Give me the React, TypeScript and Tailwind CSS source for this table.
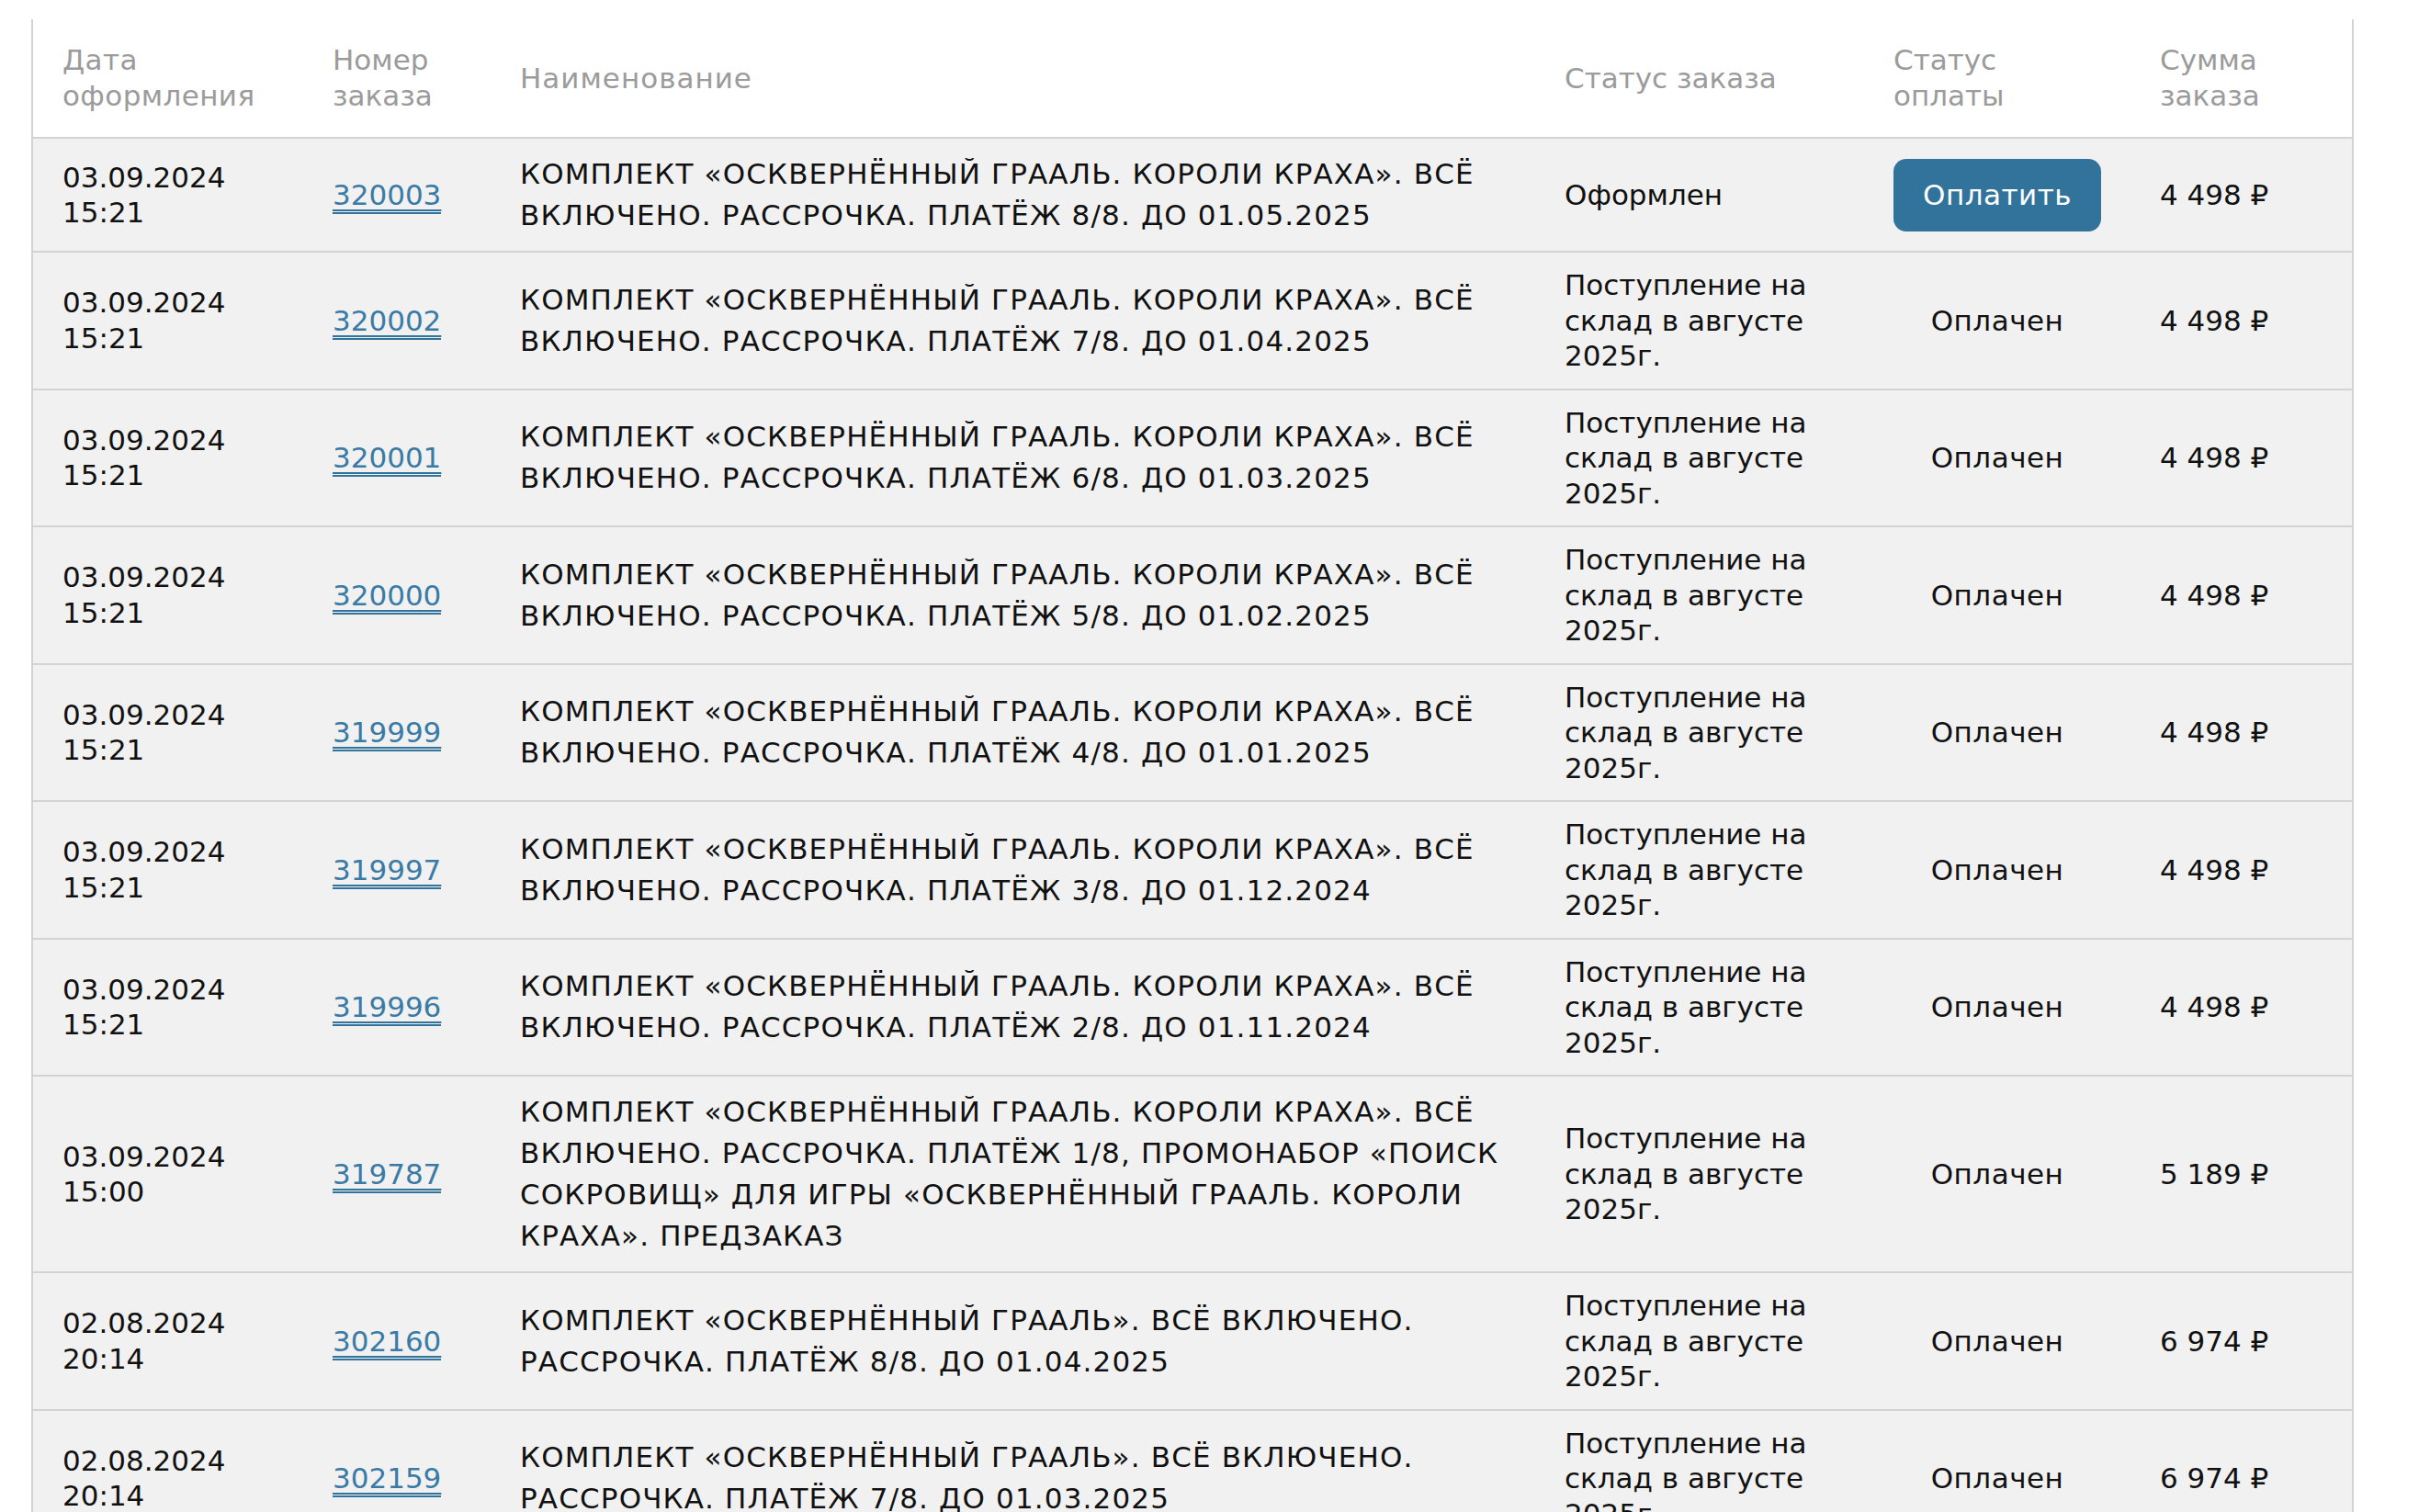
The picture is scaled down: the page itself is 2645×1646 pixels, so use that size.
type Row = {
  date: string
  time: string
  num: string
  name: string[]
  status: string[]
  paid: boolean
  sum: string
}

const WH = ['Поступление на', 'склад в августе', '2025г.']
const HEAD = 'КОМПЛЕКТ «ОСКВЕРНЁННЫЙ ГРААЛЬ. КОРОЛИ КРАХА». ВСЁ'

const rows: Row[] = [
  { date: '03.09.2024', time: '15:21', num: '320003', name: [HEAD, 'ВКЛЮЧЕНО. РАССРОЧКА. ПЛАТЁЖ 8/8. ДО 01.05.2025'], status: ['Оформлен'], paid: false, sum: '4 498 ₽' },
  { date: '03.09.2024', time: '15:21', num: '320002', name: [HEAD, 'ВКЛЮЧЕНО. РАССРОЧКА. ПЛАТЁЖ 7/8. ДО 01.04.2025'], status: WH, paid: true, sum: '4 498 ₽' },
  { date: '03.09.2024', time: '15:21', num: '320001', name: [HEAD, 'ВКЛЮЧЕНО. РАССРОЧКА. ПЛАТЁЖ 6/8. ДО 01.03.2025'], status: WH, paid: true, sum: '4 498 ₽' },
  { date: '03.09.2024', time: '15:21', num: '320000', name: [HEAD, 'ВКЛЮЧЕНО. РАССРОЧКА. ПЛАТЁЖ 5/8. ДО 01.02.2025'], status: WH, paid: true, sum: '4 498 ₽' },
  { date: '03.09.2024', time: '15:21', num: '319999', name: [HEAD, 'ВКЛЮЧЕНО. РАССРОЧКА. ПЛАТЁЖ 4/8. ДО 01.01.2025'], status: WH, paid: true, sum: '4 498 ₽' },
  { date: '03.09.2024', time: '15:21', num: '319997', name: [HEAD, 'ВКЛЮЧЕНО. РАССРОЧКА. ПЛАТЁЖ 3/8. ДО 01.12.2024'], status: WH, paid: true, sum: '4 498 ₽' },
  { date: '03.09.2024', time: '15:21', num: '319996', name: [HEAD, 'ВКЛЮЧЕНО. РАССРОЧКА. ПЛАТЁЖ 2/8. ДО 01.11.2024'], status: WH, paid: true, sum: '4 498 ₽' },
  {
    date: '03.09.2024', time: '15:00', num: '319787',
    name: [HEAD, 'ВКЛЮЧЕНО. РАССРОЧКА. ПЛАТЁЖ 1/8, ПРОМОНАБОР «ПОИСК', 'СОКРОВИЩ» ДЛЯ ИГРЫ «ОСКВЕРНЁННЫЙ ГРААЛЬ. КОРОЛИ', 'КРАХА». ПРЕДЗАКАЗ'],
    status: WH, paid: true, sum: '5 189 ₽',
  },
  { date: '02.08.2024', time: '20:14', num: '302160', name: ['КОМПЛЕКТ «ОСКВЕРНЁННЫЙ ГРААЛЬ». ВСЁ ВКЛЮЧЕНО.', 'РАССРОЧКА. ПЛАТЁЖ 8/8. ДО 01.04.2025'], status: WH, paid: true, sum: '6 974 ₽' },
  { date: '02.08.2024', time: '20:14', num: '302159', name: ['КОМПЛЕКТ «ОСКВЕРНЁННЫЙ ГРААЛЬ». ВСЁ ВКЛЮЧЕНО.', 'РАССРОЧКА. ПЛАТЁЖ 7/8. ДО 01.03.2025'], status: WH, paid: true, sum: '6 974 ₽' },
]

function Lines({ items }: { items: string[] }) {
  return <>{items.map((l, i) => <div key={i} className="whitespace-nowrap">{l}</div>)}</>
}

export default function App() {
  return (
    <div className="min-h-screen bg-white pt-[21px] pl-[34px] font-['DejaVu_Sans',sans-serif] text-[31px] text-[#111]">
      <div className="w-[2528px] border-x-2 border-[#d3d3d3]">
        <table className="w-full table-fixed border-collapse">
          <colgroup>
            <col className="w-[294px]" />
            <col className="w-[204px]" />
            <col className="w-[1137px]" />
            <col className="w-[358px]" />
            <col className="w-[290px]" />
            <col className="w-[241px]" />
          </colgroup>
          <thead>
            <tr className="text-left text-[#9b9b9b] leading-[39px]">
              <th className="px-[32px] py-[25px] font-normal align-middle tracking-[0.4px]">Дата<br />оформления</th>
              <th className="px-[32px] py-[25px] font-normal align-middle">Номер<br />заказа</th>
              <th className="px-[32px] py-[25px] font-normal align-middle tracking-[1px]">Наименование</th>
              <th className="px-[32px] py-[25px] font-normal align-middle">Статус заказа</th>
              <th className="px-[32px] py-[25px] font-normal align-middle">Статус<br />оплаты</th>
              <th className="px-[32px] py-[25px] font-normal align-middle">Сумма<br />заказа</th>
            </tr>
          </thead>
          <tbody>
            {rows.map((r) => (
              <tr key={r.num} className="bg-[#f1f1f1] border-t-2 border-[#d3d3d3] leading-[38.5px]">
                <td className="px-[32px] py-[16px] align-middle">{r.date}<br />{r.time}</td>
                <td className="px-[32px] py-[16px] align-middle">
                  <a href="#" className="text-[#3a7ba6] underline decoration-[#31739a] decoration-2 underline-offset-[5px] border-b-2 border-[#31739a] pb-[1px]">{r.num}</a>
                </td>
                <td className="px-[32px] py-[16px] align-middle leading-[45px] tracking-[1.15px]"><Lines items={r.name} /></td>
                <td className="px-[32px] py-[16px] align-middle"><Lines items={r.status} /></td>
                <td className="px-[32px] py-[16px] align-middle text-center">
                  {r.paid ? <span className="tracking-[0.5px]">Оплачен</span> : (
                    <button className="w-[226px] h-[79px] rounded-[14px] bg-[#31739a] text-white tracking-[0.5px]">Оплатить</button>
                  )}
                </td>
                <td className="px-[32px] py-[16px] align-middle whitespace-nowrap">{r.sum}</td>
              </tr>
            ))}
          </tbody>
        </table>
      </div>
    </div>
  )
}
